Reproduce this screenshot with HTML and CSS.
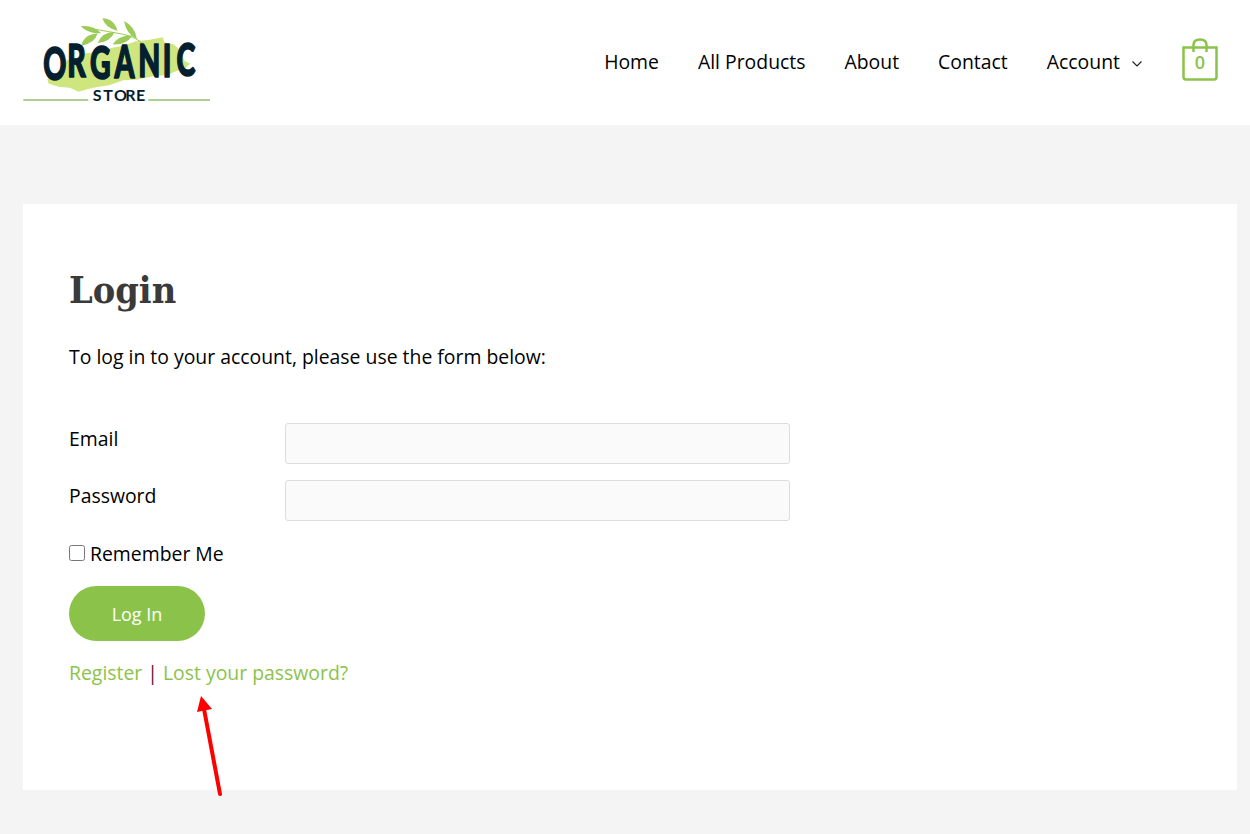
FILE: index.html
```html
<!DOCTYPE html>
<html lang="en">
<head>
    <meta charset="UTF-8">
    <meta name="viewport" content="width=device-width, initial-scale=1.0">
    <title>Login - Organic Store</title>
    <link rel="stylesheet" href="styles.css">
</head>
<body>
    <header class="site-header">
        <a class="logo" href="#">
            <svg width="187" height="90" viewBox="39 30 561 270">
                <path class="logo-blob" d="M116 236 L112 222 L128 214 L160 190 L170 166 L200 158 L228 145 L268 140 L300 130 L340 122 L378 109 L420 104 L458 97 L463 112 L490 118 L503 128 L516 150 L524 168 L541 176 L522 192 L500 198 L470 210 L430 214 L380 224 L340 226 L300 240 L250 248 L205 260 L180 248 L150 246 Z"/>
                <g class="logo-leaf">
                    <path d="M212 64 Q246 58 273 84 Q236 88 212 64 Z"/>
                    <path d="M277 40 Q314 42 322 77 Q287 70 277 40 Z"/>
                    <path d="M342 48 Q375 64 381 103 Q349 88 342 48 Z"/>
                    <path d="M214 122 Q222 88 263 85 Q254 116 214 122 Z"/>
                    <path d="M263 114 Q274 82 314 80 Q302 110 263 114 Z"/>
                    <path d="M308 118 Q326 90 367 92 Q348 121 308 118 Z"/>
                </g>
                <path class="logo-stem" d="M226 68 Q300 80 340 88 Q380 96 408 124"/>
                <g transform="scale(0.62 1)">
                    <text class="logo-name" x="161 277 387 506 621 739 806" y="226 216 223 219 216 215 212">ORGANIC</text>
                </g>
                <text class="logo-sub" x="248 280 312 346 378" y="288">STORE</text>
                <path class="logo-rule" d="M40 285 H235 M415 285 H600"/>
            </svg>
        </a>
        <nav class="main-nav">
            <a href="#">Home</a>
            <a href="#">All Products</a>
            <a href="#">About</a>
            <a href="#">Contact</a>
            <a href="#" class="has-sub">Account
                <svg width="10" height="6" viewBox="0 0 10 6"><path d="M.5 .5 L5 5 L9.5 .5"/></svg>
            </a>
        </nav>
        <a class="cart" href="#">
            <svg width="36" height="43" viewBox="0 0 36 43">
                <path d="M1.5 9.5 H34.5 V39 Q34.5 41.5 32 41.5 H4 Q1.5 41.5 1.5 39 Z"/>
                <path d="M11.5 14 V7 Q11.5 1.5 18 1.5 Q24.5 1.5 24.5 7 V14"/>
            </svg>
            <span class="cart-count">0</span>
        </a>
    </header>

    <main class="page">
        <section class="card">
            <h1>Login</h1>
            <p class="intro">To log in to your account, please use the form below:</p>
            <form class="login-form">
                <div class="field">
                    <label for="email">Email</label>
                    <input id="email" type="text">
                </div>
                <div class="field">
                    <label for="password">Password</label>
                    <input id="password" type="password">
                </div>
                <label class="remember"><input type="checkbox"> Remember Me</label>
                <button type="button" class="login-btn">Log In</button>
            </form>
            <p class="links"><a href="#">Register</a> <span class="sep">|</span> <a href="#">Lost your password?</a></p>
            <svg class="arrow" width="40" height="110" viewBox="0 0 40 110">
                <path class="arrow-line" d="M27 100 L11 15"/>
                <path class="arrow-head" d="M8 2 L19 15 L4 18 Z"/>
            </svg>
        </section>
    </main>
</body>
</html>
```

FILE: styles.css
```css
:root {
    --green: #8bc34a;
    --page-bg: #f4f4f4;
    --navy: #04202f;
}

body, html {
    margin: 0;
    padding: 0;
    height: 100%;
    font-family: 'Open Sans', sans-serif;
    color: #000;
    background: var(--page-bg);
    overflow: hidden;
}

a {
    text-decoration: none;
}

.site-header {
    height: 125px;
    box-sizing: border-box;
    background: #fff;
    display: flex;
    align-items: center;
    padding: 0 32px 0 23px;
}

.logo {
    display: block;
    height: 90px;
    align-self: flex-start;
    margin: 15px auto 0 0;
}

.logo-blob {
    fill: #cfe67f;
}

.logo-leaf {
    fill: #9ccb58;
}

.logo-stem {
    fill: none;
    stroke: #9ccb58;
    stroke-width: 3;
}

.logo-name {
    font-family: 'Lato', sans-serif;
    font-weight: 900;
    font-size: 138px;
    fill: var(--navy);
    stroke: var(--navy);
    stroke-width: 5;
    stroke-linejoin: round;
}

.logo-sub {
    font-family: 'Lato', sans-serif;
    font-weight: 700;
    font-size: 48px;
    fill: var(--navy);
}

.logo-rule {
    fill: none;
    stroke: #5da02e;
    stroke-width: 3;
}

.main-nav {
    display: flex;
    align-items: center;
    gap: 39px;
    margin: 0 40px 3px 0;
}

.main-nav a {
    font-size: 19.4px;
    color: #000;
}

.has-sub svg {
    margin-left: 7px;
    vertical-align: 2px;
}

.has-sub path {
    fill: none;
    stroke: #222;
    stroke-width: 1.2;
}

.cart {
    position: relative;
    display: block;
    width: 36px;
    height: 43px;
    margin-bottom: 6px;
}

.cart svg path {
    fill: none;
    stroke: var(--green);
    stroke-width: 2.5;
}

.cart-count {
    position: absolute;
    left: 0;
    right: 0;
    top: 12px;
    text-align: center;
    font-size: 18px;
    font-weight: 600;
    color: var(--green);
}

.page {
    padding: 79px 13px 0 23px;
}

.card {
    position: relative;
    height: 586px;
    box-sizing: border-box;
    background: #fff;
    padding: 58px 46px 0;
}

h1 {
    margin: 0;
    font-family: 'DejaVu Serif', serif;
    font-stretch: condensed;
    font-size: 37.5px;
    line-height: 56px;
    font-weight: 700;
    color: #3a3a3a;
}

.intro {
    margin: 23px 0 0;
    font-size: 19.4px;
    line-height: 32px;
}

.login-form {
    margin-top: 50px;
    display: flex;
    flex-direction: column;
    align-items: flex-start;
}

.field {
    display: grid;
    grid-template-columns: 216px 505px;
    margin-bottom: 16px;
    font-size: 19.4px;
    line-height: 32px;
}

.field input {
    height: 41px;
    box-sizing: border-box;
    background: #fafafa;
    border: 1px solid #ddd;
    border-radius: 3px;
}

.remember {
    font-size: 19.4px;
    line-height: 32px;
    margin-top: 1px;
    display: flex;
    align-items: center;
    gap: 5px;
}

.remember input {
    margin: -2px 0 0;
    width: 16px;
    height: 16px;
}

.login-btn {
    margin-top: 16px;
    width: 136px;
    height: 55px;
    border: none;
    border-radius: 28px;
    background: var(--green);
    color: #fff;
    font-family: inherit;
    font-size: 18px;
}

.links {
    margin: 16px 0 0;
    font-size: 19.4px;
    line-height: 32px;
}

.links a {
    color: var(--green);
}

.sep {
    color: #6b0f2a;
}

.arrow {
    position: absolute;
    left: 170px;
    top: 490px;
}

.arrow-line {
    fill: none;
    stroke: #ff0000;
    stroke-width: 4;
    stroke-linecap: round;
}

.arrow-head {
    fill: #ff0000;
}
```
